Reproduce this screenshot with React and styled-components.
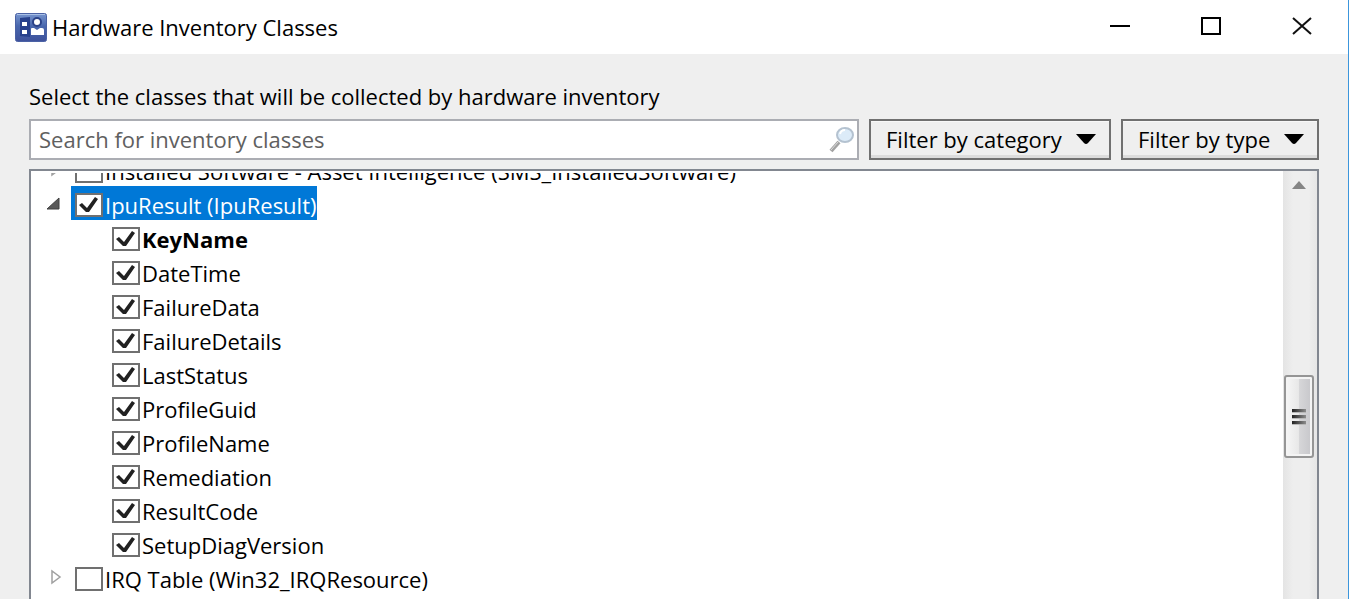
import React, { useState } from "react";
import styled, { createGlobalStyle, css } from "styled-components";

const GlobalStyle = createGlobalStyle`
  *, *::before, *::after { box-sizing: border-box; }
  body {
    margin: 0;
    background: #efefef;
    color: #000;
    font-family: "Open Sans", "Noto Sans", sans-serif;
    font-size: 22px;
    line-height: 32px;
  }
  button, input { font: inherit; color: inherit; }
`;

const Window = styled.div`
  display: flex;
  flex-direction: column;
  height: 100vh;
  overflow: hidden;
  background: #efefef;
  border-right: 1px solid #3c96dc;
`;

const TitleBar = styled.header`
  display: flex;
  align-items: center;
  height: 54px;
  flex: none;
  padding: 0 1px 0 15px;
  background: #fff;
`;

const AppIcon = styled.svg`
  width: 32px;
  height: 29px;
  margin-right: 5px;
  flex: none;
`;

const Title = styled.h1`
  flex: 1;
  margin: 0;
  font-size: 22px;
  font-weight: 400;
  line-height: 32px;
`;

const CaptionButton = styled.button`
  display: flex;
  align-items: center;
  justify-content: center;
  width: 91px;
  height: 52px;
  margin-bottom: 2px;
  padding: 0;
  border: 0;
  background: transparent;
`;

const Body = styled.main`
  display: flex;
  flex: 1;
  flex-direction: column;
  min-height: 0;
  padding: 26px 29px 0;
`;

const Prompt = styled.label`
  margin-bottom: 7px;
`;

const Toolbar = styled.div`
  display: flex;
  gap: 10px;
  height: 41px;
  flex: none;
  margin-bottom: 9px;
`;

const SearchBox = styled.div`
  display: flex;
  flex: 1;
  align-items: center;
  min-width: 0;
  padding-right: 2px;
  border: 2px solid #abadb3;
  background: #fff;
`;

const SearchInput = styled.input`
  flex: 1;
  min-width: 0;
  height: 100%;
  padding: 0 8px 2px;
  border: 0;
  outline: 0;
  background: transparent;
  &::placeholder { color: #606060; opacity: 1; }
`;

const FilterButton = styled.button`
  display: flex;
  align-items: center;
  justify-content: space-between;
  width: ${(p) => p.$width}px;
  padding: 0 13px 2px 15px;
  border: 2px solid #707070;
  background: #efefef;
  box-shadow: inset 0 1px #f8f8f8, inset 0 -3px #dcdcdc;
  white-space: nowrap;
`;

const TreePanel = styled.section`
  display: flex;
  flex: 1;
  min-height: 0;
  padding-top: 2px;
  border: 2px solid #828790;
  border-bottom: 0;
  background: #fff;
`;

const TreeView = styled.div`
  flex: 1;
  min-width: 0;
  overflow: hidden;
`;

const Tree = styled.ul`
  margin: -21px 0 0;
  padding: 0 0 0 13px;
  list-style: none;
`;

const SubTree = styled.ul`
  margin: 0;
  padding: 0 0 0 68px;
  list-style: none;
`;

const Row = styled.div`
  display: flex;
  align-items: center;
  height: 34px;
`;

const Expander = styled.button`
  display: flex;
  align-items: center;
  justify-content: center;
  width: 27px;
  height: 34px;
  padding: 0 4px 0 0;
  border: 0;
  background: transparent;
`;

const Item = styled.label`
  display: flex;
  align-items: flex-start;
  height: 34px;
  padding-left: ${(p) => (p.$child ? 0 : 4)}px;
  font-weight: ${(p) => (p.$strong ? 700 : 400)};
  line-height: 39px;
  white-space: nowrap;
  ${(p) => p.$selected && css`
    background: #0078d7;
    color: #fff;
  `}
`;

const CheckFrame = styled.span`
  display: grid;
  width: 28px;
  height: 24px;
  margin: 7px 2px 0 0;
  > * { grid-area: 1 / 1; }
`;

const CheckInput = styled.input`
  appearance: none;
  width: 28px;
  height: 24px;
  margin: 0;
  border: 2px solid #707070;
  background: #fff;
  &:not(:checked) + svg { visibility: hidden; }
`;

const CheckMark = styled.svg`
  width: 28px;
  height: 24px;
  pointer-events: none;
`;

const ScrollBar = styled.div`
  display: flex;
  flex-direction: column;
  align-items: center;
  width: 34px;
  flex: none;
  margin-top: -2px;
  padding-right: 2px;
  background: linear-gradient(90deg, #e4e4e4, #eeeeee 30%, #eeeeee 75%, #e6e6e6);
`;

const ScrollArrow = styled.button`
  display: flex;
  align-items: center;
  justify-content: center;
  width: 32px;
  height: 28px;
  padding: 0;
  border: 0;
  background: transparent;
`;

const ScrollThumb = styled.div`
  display: flex;
  flex-direction: column;
  align-items: center;
  justify-content: center;
  gap: 2px;
  width: 30px;
  height: 83px;
  margin-top: 176px;
  border: 2px solid #959595;
  border-radius: 3px;
  background: linear-gradient(90deg, #f6f6f6, #e8e8e8 48%, #d6d6d8 52%, #c6c6ca);
  box-shadow: inset 0 0 0 2px #f4f4f4;
`;

const Grip = styled.span`
  width: 14px;
  height: 4px;
  border-bottom: 1px solid #b8b8b8;
  background: linear-gradient(90deg, #222, #8c8c8c);
`;

function CheckBox(props) {
  return (
    <CheckFrame>
      <CheckInput type="checkbox" {...props} />
      <CheckMark viewBox="0 0 28 24" aria-hidden="true">
        <path d="M4 12 L7 10 L12 15 L20 4 L23 6 L14 19 L11 19 Z" fill="#212121" />
      </CheckMark>
    </CheckFrame>
  );
}

function TreeItem({ name, checked, selected, strong, child }) {
  const [on, setOn] = useState(Boolean(checked));
  return (
    <Item $selected={selected} $strong={strong} $child={child}>
      <CheckBox checked={on} onChange={() => setOn(!on)} />
      <span>{name}</span>
    </Item>
  );
}

const OpenArrow = styled.svg`
  width: 14px;
  height: 13px;
  margin-right: 6px;
`;

function Arrow({ open }) {
  return open ? (
    <OpenArrow viewBox="0 0 14 13">
      <path d="M13 1 V12 H1 Z" fill="#595959" stroke="#404040" />
    </OpenArrow>
  ) : (
    <svg width="12" height="16" viewBox="0 0 12 16">
      <path d="M2 2 V14 L10 8 Z" fill="#fff" stroke="#a0a0a0" strokeWidth="1.5" />
    </svg>
  );
}

function DownArrow() {
  return (
    <svg width="20" height="12" viewBox="0 0 20 12" aria-hidden="true">
      <path d="M0 1 H20 L12 10 Q10 12 8 10 Z" />
    </svg>
  );
}

const properties = [
  "KeyName", "DateTime", "FailureData", "FailureDetails", "LastStatus",
  "ProfileGuid", "ProfileName", "Remediation", "ResultCode", "SetupDiagVersion",
];

const classes = [
  { name: "Installed Software - Asset Intelligence (SMS_InstalledSoftware)" },
  { name: "IpuResult (IpuResult)", checked: true, selected: true, items: properties },
  { name: "IRQ Table (Win32_IRQResource)" },
];

export default function App() {
  const [query, setQuery] = useState("");
  return (
    <Window>
      <GlobalStyle />
      <TitleBar>
        <AppIcon viewBox="0 0 32 29" aria-hidden="true">
          <defs>
            <linearGradient id="tile" x2="0" y2="1">
              <stop stopColor="#7896cf" />
              <stop offset=".45" stopColor="#4967ad" />
              <stop offset="1" stopColor="#3e519b" />
            </linearGradient>
          </defs>
          <rect x=".5" y=".5" width="31" height="28" rx="2" fill="url(#tile)" stroke="#4b62a5" />
          <path d="M2 1.5H30" stroke="#a9c0e6" />
          <path d="M5 5 L15 4 V24 L5 23Z" fill="#27408c" />
          <path d="M7 9h5v4H7zM7 17h5v4H7z" fill="#fff" />
          <circle cx="22" cy="9" r="4" fill="#fff" stroke="#2b4288" strokeWidth="2" />
          <path d="M16 22V16q0-1 1-1h2l3 2 3-2h2q2 0 2 2v5z" fill="#fff" />
        </AppIcon>
        <Title>Hardware Inventory Classes</Title>
        <CaptionButton aria-label="Minimize">
          <svg width="20" height="20"><path d="M0 10H20" stroke="#000" strokeWidth="2" /></svg>
        </CaptionButton>
        <CaptionButton aria-label="Maximize">
          <svg width="20" height="20"><rect x="1" y="2" width="18" height="16" fill="none" stroke="#000" strokeWidth="2" /></svg>
        </CaptionButton>
        <CaptionButton aria-label="Close">
          <svg width="20" height="20"><path d="M1 2L19 18M19 2L1 18" stroke="#111" strokeWidth="2" /></svg>
        </CaptionButton>
      </TitleBar>
      <Body>
        <Prompt htmlFor="class-search">Select the classes that will be collected by hardware inventory</Prompt>
        <Toolbar>
          <SearchBox>
            <SearchInput
              id="class-search"
              placeholder="Search for inventory classes"
              value={query}
              onChange={(e) => setQuery(e.target.value)}
            />
            <svg width="26" height="28" viewBox="0 0 26 28" aria-hidden="true">
              <path d="M2 25 L10 16" stroke="#a2a2a2" strokeWidth="4" />
              <path d="M2 24 L9 16" stroke="#ddd" strokeWidth="1" />
              <ellipse cx="16" cy="9" rx="8" ry="7" fill="#dcebf8" stroke="#b4c2d0" strokeWidth="2" />
              <path d="M11 8q1-4 5-4" fill="none" stroke="#fff" strokeWidth="2" />
            </svg>
          </SearchBox>
          <FilterButton $width={242}>Filter by category <DownArrow /></FilterButton>
          <FilterButton $width={198}>Filter by type <DownArrow /></FilterButton>
        </Toolbar>
        <TreePanel aria-label="Inventory classes">
          <TreeView>
            <Tree>
              {classes.map(({ items, ...entry }) => (
                <li key={entry.name}>
                  <Row>
                    <Expander aria-label={items ? "Collapse" : "Expand"}>
                      <Arrow open={Boolean(items)} />
                    </Expander>
                    <TreeItem {...entry} />
                  </Row>
                  {items && (
                    <SubTree>
                      {items.map((name, i) => (
                        <li key={name}>
                          <Row><TreeItem name={name} checked child strong={i === 0} /></Row>
                        </li>
                      ))}
                    </SubTree>
                  )}
                </li>
              ))}
            </Tree>
          </TreeView>
          <ScrollBar>
            <ScrollArrow aria-label="Scroll up">
              <svg width="14" height="8"><path d="M7 0L14 8H0Z" fill="#858585" /></svg>
            </ScrollArrow>
            <ScrollThumb><Grip /><Grip /><Grip /></ScrollThumb>
          </ScrollBar>
        </TreePanel>
      </Body>
    </Window>
  );
}
